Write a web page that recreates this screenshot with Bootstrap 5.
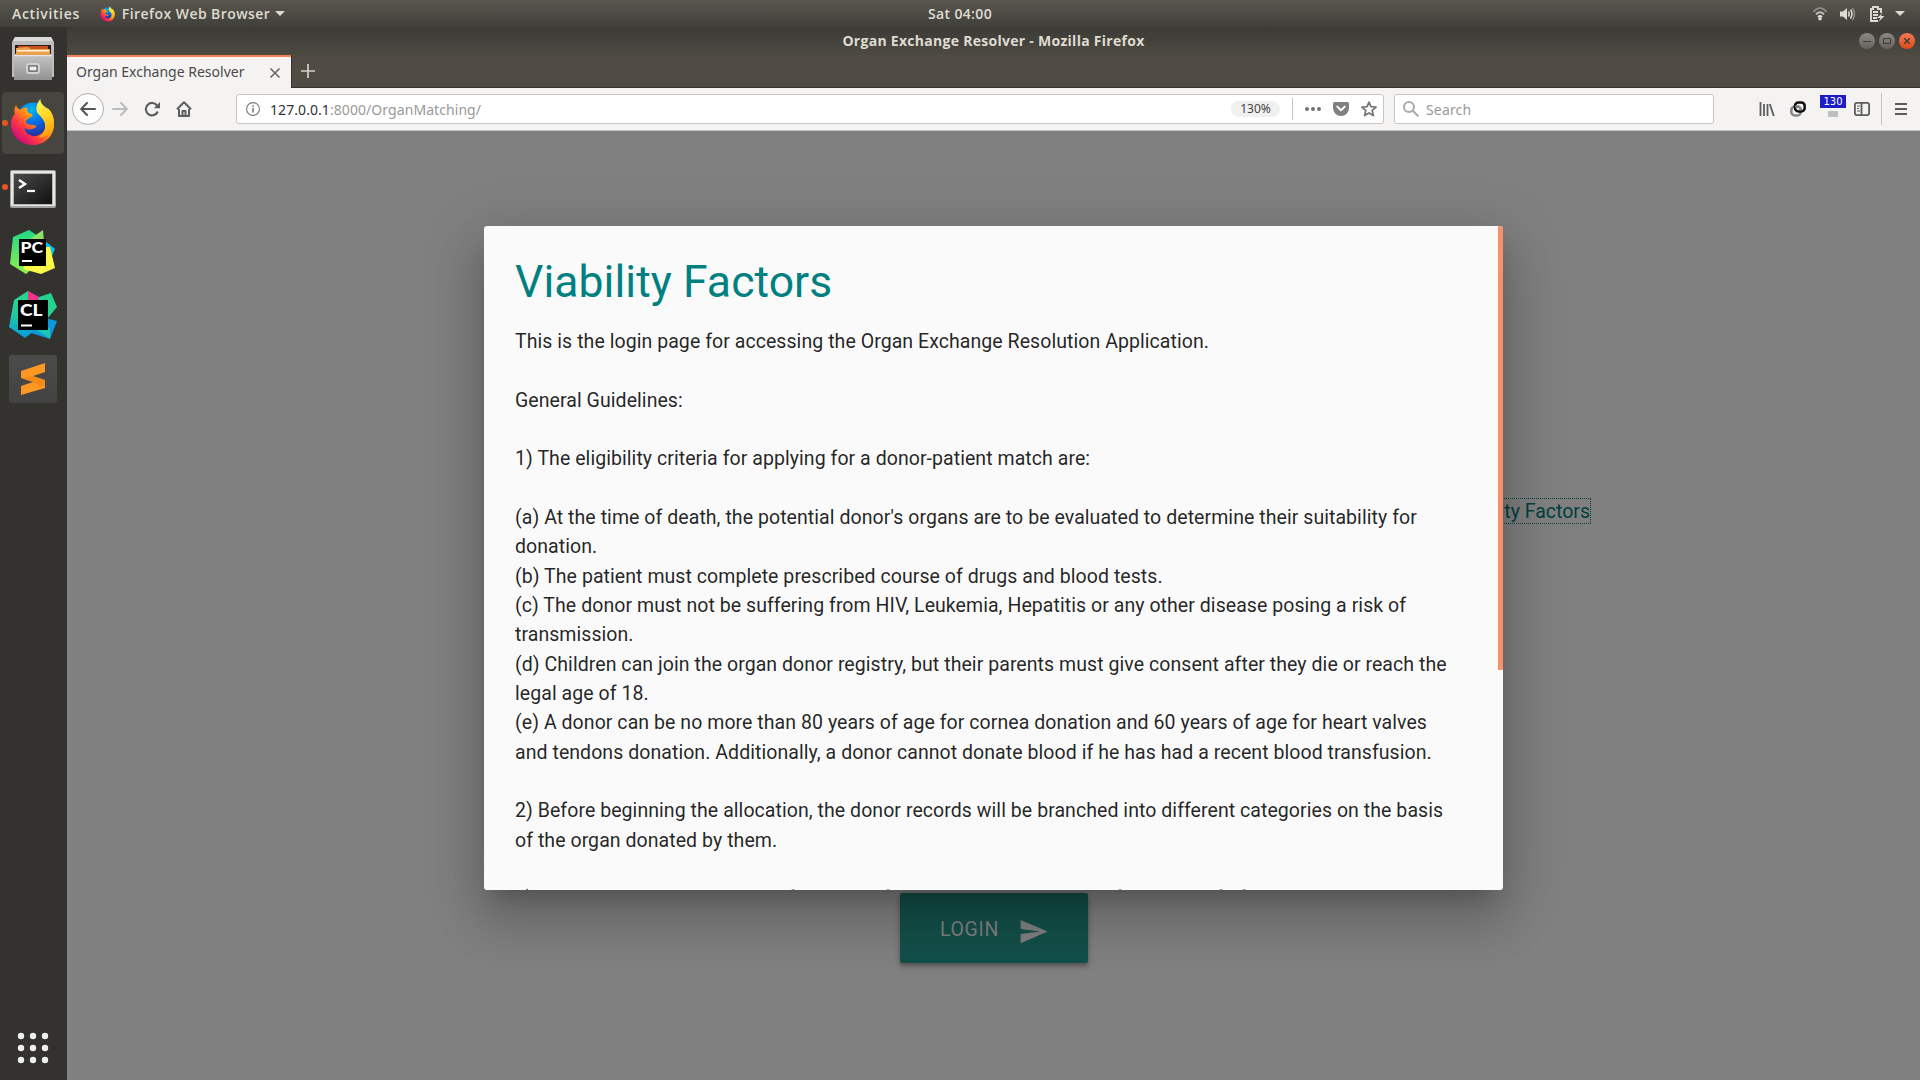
<!DOCTYPE html>
<html lang="en">
<head>
<meta charset="utf-8">
<title>Organ Exchange Resolver</title>
<link href="https://cdn.jsdelivr.net/npm/bootstrap@5.3.0/dist/css/bootstrap.min.css" rel="stylesheet">
<style>
html,body{height:100%;overflow:hidden}
body{font-family:"Noto Sans","Open Sans",sans-serif;font-size:14px;line-height:1;background:#808080}
svg{display:block;flex:none}
.txt{white-space:nowrap;display:inline-block}
.sysbar{height:27px;flex:none;background:linear-gradient(#5a574f,#403f3a);color:#dfdbd2;font-weight:600;font-family:"Open Sans",sans-serif}
.dock{width:67px;flex:none;background:#33322e}
.slot{height:64px;padding-right:2px}
.tile{width:62px;height:62px;border-radius:4px;background:#464540}
.tile-sm{width:48px;height:48px;border-radius:3px;background:linear-gradient(#4b4b4c,#434344)}
.run-dot{left:2px;top:50%;width:6px;height:6px;margin-top:-3px;border-radius:50%;background:#e95420}
.titlebar{height:28px;flex:none;background:linear-gradient(#3b3a36,#4d4a42);color:#dfdbd2;font-weight:700;font-family:"Open Sans",sans-serif;letter-spacing:.28px}
.tabstrip{height:33px;flex:none;background:#504c44}
.tab-on{width:224px;background:#f4f3f2;border-top:2px solid #f0815a;color:#4a4a4a;padding-left:9px;padding-right:8px}
.tab-rest{border-left:1px solid #33322e;border-bottom:1px solid #33322e}
.toolbar{height:43px;flex:none;background:#f4f3f2;border-bottom:1px solid #c3c2c0;padding-left:5px}
.tool{width:32px;height:32px;flex:none}
.back-btn{border:1px solid #b0afad;border-radius:50%;background:#fdfdfd}
.field{height:30px;background:#fff;border:1px solid #c6c5c3;border-radius:3px;color:#999;flex:none}
.url-field{width:1148px;margin-left:36px}
.search-field{width:320px;margin-left:10px;margin-right:36px}
.zoom-pill{width:49px;height:16px;border-radius:8px;background:#f0f0f0;color:#444;font-size:12px}
.vline{width:1px;background:#c6c5c3}
.count{width:26px;height:13px;background:#1d1dc4;color:#fff;font:10px "DejaVu Sans",sans-serif}
.stub{width:10px;height:6px;background:#bfbfbf}
.page{background:#808080;font-family:Roboto,sans-serif;font-size:19.5px}
.factor-link{color:#00403f;border:1px dotted #003f40;height:26px;line-height:26px;margin:367px 329px 0 0}
.login-btn{width:188px;height:70px;margin-top:369px;margin-left:1px;border-radius:2px;background:#135049;color:#808080;padding-left:40px;box-shadow:0 3px 3px rgba(0,0,0,.14),0 4px 6px rgba(0,0,0,.12),0 1px 6px rgba(0,0,0,.15)}
.dialog-box{left:417px;top:95px;width:1019px;height:664px;background:#fafafa;border-radius:3px;padding:32px 31px 0;color:rgba(0,0,0,.87);box-shadow:0 31px 49px 4px rgba(0,0,0,.14),0 12px 60px 10px rgba(0,0,0,.12),0 14px 20px -9px rgba(0,0,0,.2)}
.dialog-box h4{color:teal;font-size:44.5px;line-height:49px;margin:0 0 20px;font-weight:400;letter-spacing:.05px}
.dialog-box p{line-height:29.33px;white-space:nowrap;margin:0;letter-spacing:.06px}
.read-bar{right:0;top:0;width:5px;height:444px;background:#f4926b;border-radius:1px}
</style>
<script src="https://cdn.jsdelivr.net/npm/bootstrap@5.3.0/dist/js/bootstrap.bundle.min.js"></script>
</head>
<body class="d-flex flex-column">
<svg width="0" height="0" class="position-absolute">
 <defs>
  <linearGradient id="fxBody" x1=".9" y1=".1" x2=".1" y2=".9"><stop offset="0" stop-color="#ffe226"/><stop offset=".4" stop-color="#ff980e"/><stop offset=".68" stop-color="#ff3647"/><stop offset="1" stop-color="#c60084"/></linearGradient>
  <radialGradient id="fxGlobe" cx=".45" cy=".2" r=".85"><stop offset="0" stop-color="#00b5f0"/><stop offset=".5" stop-color="#0a63e0"/><stop offset="1" stop-color="#321b7c"/></radialGradient>
  <linearGradient id="fxTail" x1=".3" y1="0" x2=".6" y2="1"><stop offset="0" stop-color="#fff44f"/><stop offset=".5" stop-color="#ffd524"/><stop offset="1" stop-color="#ff9a0c"/></linearGradient>
  <linearGradient id="steel" x1="0" y1="0" x2="0" y2="1"><stop offset="0" stop-color="#c4c4c4"/><stop offset="1" stop-color="#929292"/></linearGradient>
  <linearGradient id="screen" x1="0" y1="0" x2="1" y2="1"><stop offset="0" stop-color="#4a4a4a"/><stop offset=".5" stop-color="#2e2e2e"/><stop offset="1" stop-color="#101010"/></linearGradient>
  <linearGradient id="orb" x1="0" y1="0" x2="0" y2="1"><stop offset="0" stop-color="#8b8983"/><stop offset="1" stop-color="#64625c"/></linearGradient>
  <linearGradient id="orbRed" x1="0" y1="0" x2="0" y2="1"><stop offset="0" stop-color="#f37a52"/><stop offset="1" stop-color="#df4a16"/></linearGradient>
  <linearGradient id="pcG" x1="0" y1="0" x2="0" y2="1"><stop offset="0" stop-color="#21d789"/><stop offset="1" stop-color="#8ff04a"/></linearGradient>
  <linearGradient id="clG" x1="0" y1="0" x2="0" y2="1"><stop offset="0" stop-color="#26d78d"/><stop offset=".5" stop-color="#21c9a0"/><stop offset="1" stop-color="#069adf"/></linearGradient>
  <symbol id="fox" viewBox="0 0 46 48">
   <circle cx="24" cy="22" r="18.500" fill="url(#fxGlobe)"/>
   <path d="M6 6C4 10 4 13 5 15C1 19 0 26 2 32C5 42 14 47 23 47C35 47 45 38 45 26C45 18 42 12 38 9C41 17 39 23 36 26C37 34 30 38 24 38C18 37 15 33 15 30C20 32 24 31 27 28C26 26 21 27 17 25C15 22 18 20 22 18C24 16 23 15 21 15C18 14 17 12 18 9C14 8 12 10 11 11C8 10 7 8 6 6Z" fill="url(#fxBody)"/>
   <path d="M31 0C27 5 26 10 28 14C31 18 36 21 36 28C36 33 33 36 29 39C38 39 45 33 45 25C45 17 42 12 37 9C33 6 31 4 31 0Z" fill="url(#fxTail)"/>
  </symbol>
 </defs>
</svg>

<header class="sysbar d-flex align-items-center position-relative">
 <span class="txt" style="margin-left:12px;letter-spacing:.65px">Activities</span>
 <svg width="15" height="16" style="margin-left:20px"><use href="#fox"/></svg>
 <span class="txt" style="margin-left:7px;letter-spacing:.43px">Firefox Web Browser</span>
 <svg width="10" height="6" style="margin-left:5px"><path d="M0 0h10L5 5z" fill="#dfdbd2"/></svg>
 <span class="txt position-absolute top-50 start-50 translate-middle" style="letter-spacing:.35px">Sat 04:00</span>
 <div class="d-flex align-items-center ms-auto" style="margin-right:15px">
  <svg width="14" height="14" viewBox="0 0 14 14" fill="none" stroke="#8d8b85" stroke-width="1.8"><path d="M.5 5C4-.2 10-.2 13.500 5" /><path d="M3 7.500c2-3 6-3 8 0" stroke="#c5c2bb"/><path d="M5 10q2-2 4 0" stroke="#dfdbd2"/><circle cx="7" cy="11.700" r="1.800" fill="#dfdbd2" stroke="none"/></svg>
  <svg width="16" height="14" viewBox="0 0 16 14" fill="none" stroke="#dfdbd2" stroke-width="1.500" style="margin-left:13px"><path d="M0 4.500h3L7 1v12L3 9.500H0z" fill="#dfdbd2" stroke="none"/><path d="M8.500 4.500q1.500 2.500 0 5M10.500 2.500q3 4.500 0 9"/><path d="M12.500 .8q4 6 0 12.400" stroke="#8d8b85"/></svg>
  <svg width="15" height="16" viewBox="0 0 15 16" fill="none" stroke="#dfdbd2" stroke-width="1.900" style="margin-left:14px"><path d="M8 15H1V3h2V1h5v2h3v4M3 6h5M3 9h5M3 12h4"/><path d="M12.500 7L7 12h3.500L8.500 16l6-6H11z" fill="#dfdbd2" stroke="none"/></svg>
  <svg width="10" height="6" style="margin-left:10px"><path d="M0 0h10L5 5z" fill="#dfdbd2"/></svg>
 </div>
</header>

<div class="d-flex flex-grow-1">
 <nav class="dock d-flex flex-column">
  <div class="slot d-flex align-items-center justify-content-center">
   <svg width="42" height="44" viewBox="0 0 42 44"><path d="M3 0h36l3 5v35H0V5z" fill="#bdbdbd"/><path d="M3 0h36l2 4H1z" fill="#dadada"/><path d="M3 8h36v9H3z" fill="#2b1c15"/><path d="M6 9h30v3H6z" fill="#c8501c"/><path d="M4 11l12-1 3 2h19v6H4z" fill="#eda04c"/><path d="M5 13h32v1.500H5z" fill="#fff1dc"/><path d="M2 18h38v25H2z" fill="url(#steel)"/><path d="M2 18h38v1.200H2z" fill="#e4e4e4"/><rect x="15" y="27" width="12" height="9" rx="2" fill="none" stroke="#d2d2d2" stroke-width="2"/><rect x="17" y="29" width="8" height="5" fill="#eee" stroke="#555"/></svg>
  </div>
  <div class="slot d-flex align-items-center justify-content-center position-relative">
   <div class="tile d-flex align-items-center justify-content-center"><svg width="45" height="47" style="margin-top:-2px"><use href="#fox"/></svg></div><i class="run-dot position-absolute"></i>
  </div>
  <div class="slot d-flex align-items-center justify-content-center position-relative">
   <svg width="46" height="38" viewBox="0 0 46 38" style="margin-top:3px"><rect width="46" height="38" rx="2" fill="#a0a09e"/><rect x="1" y="1" width="44" height="35" rx="1" fill="#e6e6e4"/><rect x="3" y="3" width="40" height="32" fill="#b5b5b3"/><rect x="4" y="4" width="38" height="30" fill="url(#screen)"/><path d="M9 10l6 4-6 4" fill="none" stroke="#fff" stroke-width="2.400"/><path d="M17 21h8" stroke="#fff" stroke-width="2.200"/></svg><i class="run-dot position-absolute"></i>
  </div>
  <div class="slot d-flex align-items-center justify-content-center">
   <svg width="48" height="48" viewBox="0 0 48 48" style="margin-top:-1px"><path d="M4 10L20 3l12 8-8 30-7 6L1 37z" fill="url(#pcG)"/><path d="M34 3l1 12-14-3z" fill="#8ee26c"/><path d="M36 14l10 8-6 14-8-6z" fill="#07c3f2"/><path d="M36 20h5l5 21-14 6-18-5 4-8z" fill="#fcf84a"/><rect x="10" y="12" width="27" height="27"/><text x="11.500" y="26" font-family="Lato,sans-serif" font-weight="900" font-size="15.500" textLength="22.500" lengthAdjust="spacingAndGlyphs" fill="#fff">PC</text><path d="M13 33h10v2H13z" fill="#fff"/></svg>
  </div>
  <div class="slot d-flex align-items-center justify-content-center">
   <svg width="48" height="48" viewBox="0 0 48 48"><path d="M5 9L19 0l10 7-5 34-8 6L0 36z" fill="url(#clG)"/><path d="M19 0l11 6v6H19z" fill="#ed358c"/><path d="M30 6l12-4 6 14-10 12-10-14z" fill="#22d490"/><path d="M36 27l12 3-7 18-19-6z" fill="#0b98dc"/><path d="M28 39l13-2v11z" fill="#1cc5b0"/><rect x="9" y="9" width="30" height="30"/><text x="11" y="25" font-family="Lato,sans-serif" font-weight="900" font-size="17" textLength="22.500" lengthAdjust="spacingAndGlyphs" fill="#fff">CL</text><path d="M12 33.500h11v2H12z" fill="#fff"/></svg>
  </div>
  <div class="slot d-flex align-items-center justify-content-center">
   <div class="tile-sm d-flex align-items-center justify-content-center"><svg width="24" height="32" viewBox="0 0 24 32"><path d="M0 8L24 0v9L12 13l12 4v8L0 32v-9l12-4-12-4z" fill="#ff9822"/><path d="M0 15l12 4 8 4.500 4-1.500v-5L12 13z" fill="#e67c10" opacity=".45"/></svg></div>
  </div>
  <svg class="mt-auto" width="30" height="31" style="margin:0 0 16px 18px;overflow:visible" fill="#eeeeec"><g id="r"><circle cx="3" cy="3" r="3.200"/><circle cx="15" cy="3" r="3.200"/><circle cx="27" cy="3" r="3.200"/></g><use href="#r" y="12"/><use href="#r" y="24"/></svg>
 </nav>

 <main class="d-flex flex-column flex-grow-1">
  <div class="titlebar d-flex align-items-center justify-content-center position-relative">
   <span class="txt">Organ Exchange Resolver - Mozilla Firefox</span>
   <div class="position-absolute end-0 d-flex" style="gap:4px;margin-right:5px">
    <svg width="16" height="16" viewBox="0 0 16 16"><circle cx="8" cy="8" r="8" fill="url(#orb)"/><path d="M4 8.500h8" stroke="#3c3b37"/></svg>
    <svg width="16" height="16" viewBox="0 0 16 16"><circle cx="8" cy="8" r="8" fill="url(#orb)"/><path d="M4.500 5.500h7v5h-7z" fill="none" stroke="#3c3b37"/></svg>
    <svg width="16" height="16" viewBox="0 0 16 16"><circle cx="8" cy="8" r="8" fill="url(#orbRed)"/><path d="M5.200 5.200l5.600 5.600M10.800 5.200l-5.600 5.600" stroke="#3c3b37" stroke-width="1.300"/></svg>
   </div>
  </div>
  <div class="tabstrip d-flex">
   <div class="tab-on d-flex align-items-center justify-content-between"><span class="txt" style="margin-top:-2px">Organ Exchange Resolver</span>
    <svg width="16" height="16" viewBox="0 0 16 16" stroke="#666" stroke-width="1.600"><path d="M3.500 3.500l9 9M12.500 3.500l-9 9"/></svg></div>
   <div class="tab-rest flex-grow-1 d-flex align-items-center"><svg width="14" height="14" viewBox="0 0 14 14" stroke="#d4d1c9" stroke-width="1.700" style="margin-left:9px"><path d="M7 0v14M0 7h14"/></svg></div>
  </div>
  <div class="toolbar d-flex align-items-center">
   <div class="tool back-btn d-flex align-items-center justify-content-center"><svg width="16" height="14" viewBox="0 0 16 14" fill="none" stroke="#555" stroke-width="2" stroke-linecap="round" stroke-linejoin="round"><path d="M15 7H1.500M7 1L1.200 7 7 13"/></svg></div>
   <div class="tool d-flex align-items-center justify-content-center"><svg width="16" height="14" viewBox="0 0 16 14" fill="none" stroke="#bbb" stroke-width="2" stroke-linecap="round" stroke-linejoin="round"><path d="M1 7h13.500M9 1l5.800 6L9 13"/></svg></div>
   <div class="tool d-flex align-items-center justify-content-center"><svg width="16" height="16" viewBox="0 0 16 16" fill="none" stroke="#5c5c5c" stroke-width="2.100"><path d="M13.800 10.500A6.200 6.200 0 1 1 13.300 4.800"/><path d="M16 1v6.200H9.800z" fill="#5c5c5c" stroke="none"/></svg></div>
   <div class="tool d-flex align-items-center justify-content-center"><svg width="16" height="16" viewBox="0 0 16 16" fill="none" stroke="#5c5c5c" stroke-width="2" stroke-linejoin="round"><path d="M1 8.300L8 1.200l7 7.100M3 8v7h10V8"/><path d="M6.500 15v-5h3v5"/></svg></div>
   <div class="field url-field d-flex align-items-center">
    <svg width="14" height="14" viewBox="0 0 14 14" fill="none" stroke="#777" style="margin-left:9px"><circle cx="7" cy="7" r="6.400" stroke-width="1.100"/><path d="M7 6v4.500M7 3.200v1.600" stroke-width="1.600"/></svg>
    <span class="txt" style="margin:1px 0 0 10px;letter-spacing:.07px"><span style="color:#333">127.0.0.1</span>:8000/OrganMatching/</span>
    <span class="zoom-pill d-flex align-items-center justify-content-center ms-auto">130%</span>
    <span class="vline" style="height:22px;margin-left:12px"></span>
    <svg width="16" height="4" style="margin-left:12px" fill="#737373"><circle cx="2" cy="2" r="2"/><circle cx="8" cy="2" r="2"/><circle cx="14" cy="2" r="2"/></svg>
    <svg width="16" height="14" viewBox="0 0 16 14" style="margin-left:12px"><path d="M1.500 0h13Q16 0 16 1.500V6a8 8 0 0 1-16 0V1.500Q0 0 1.500 0z" fill="#808080"/><path d="M4.300 4.600L8 8.200l3.700-3.600" fill="none" stroke="#fff" stroke-width="2" stroke-linecap="round" stroke-linejoin="round"/></svg>
    <svg width="16" height="16" viewBox="0 0 16 16" style="margin:0 6px 0 12px" fill="none" stroke="#777" stroke-width="1.800" stroke-linejoin="round"><path d="M8 1.200l2 4.500 5 .5-3.800 3.200 1.200 5.200L8 12l-4.400 2.600 1.200-5.200L1 6.200l5-.5z"/></svg>
   </div>
   <div class="field search-field d-flex align-items-center">
    <svg width="16" height="16" viewBox="0 0 16 16" fill="none" stroke="#aaa" stroke-width="2" style="margin-left:8px"><circle cx="6" cy="6" r="5"/><path d="M9.700 9.700L15.300 15.300"/></svg>
    <span class="txt" style="margin:1px 0 0 7px;letter-spacing:.15px">Search</span>
   </div>
   <div class="tool d-flex align-items-center justify-content-center"><svg width="16" height="14" viewBox="0 0 16 14" stroke="#5c5c5c" stroke-width="1.800" style="margin-left:1px"><path d="M1.500 0v14M5 2v12M8.500 2v12M10.800 2l4 12"/></svg></div>
   <div class="tool d-flex align-items-center justify-content-center"><svg width="16" height="16" viewBox="0 0 16 16" fill="none" stroke-width="2.500"><rect x="1.300" y="5.500" width="9.500" height="9" rx="3.500" stroke="#85858c"/><rect x="5" y="1.400" width="9.700" height="9" rx="3.500" stroke="#0c0c0d"/><path d="M5 5.500h2q3.800 0 3.800 4" stroke="#85858c" stroke-width="2"/></svg></div>
   <div class="d-flex flex-column align-items-center" style="width:38px;gap:3px;margin-top:-6px"><span class="count d-flex align-items-center justify-content-center">130</span><span class="stub"></span></div>
   <div class="d-flex justify-content-center" style="width:20px"><svg width="16" height="14" viewBox="0 0 16 14" fill="none" stroke="#5c5c5c" stroke-width="1.800"><rect x=".9" y=".9" width="14.200" height="12.200" rx="2"/><path d="M7.500 1v12"/><path d="M3 4h3M3 6.500h2M3 9h3" stroke-width="1"/></svg></div>
   <span class="vline" style="height:32px;margin-left:9px"></span>
   <div class="flex-grow-1 d-flex justify-content-center"><svg width="12" height="12" viewBox="0 0 12 12" stroke="#5c5c5c" stroke-width="1.800"><path d="M0 1h12M0 6h12M0 11h12"/></svg></div>
  </div>

  <div class="page flex-grow-1 position-relative d-flex flex-column align-items-center">
   <a class="factor-link align-self-end text-decoration-none txt">Viability Factors</a>
   <div class="login-btn d-flex align-items-center"><span class="txt" style="letter-spacing:.65px;padding-top:4px">LOGIN</span>
    <svg width="31" height="31" viewBox="0 0 24 24" style="margin:6px 0 0 19px"><path d="M2 21L23 12 2 3v7l15 2-15 2z" fill="#808080"/></svg></div>
   <section class="dialog-box position-absolute overflow-hidden">
    <h4>Viability Factors</h4>
    <p>This is the login page for accessing the Organ Exchange Resolution Application.<br><br>
General Guidelines:<br><br>
1) The eligibility criteria for applying for a donor-patient match are:<br><br>
(a) At the time of death, the potential donor's organs are to be evaluated to determine their suitability for<br>donation.<br>
(b) The patient must complete prescribed course of drugs and blood tests.<br>
(c) The donor must not be suffering from HIV, Leukemia, Hepatitis or any other disease posing a risk of<br>transmission.<br>
(d) Children can join the organ donor registry, but their parents must give consent after they die or reach the<br>legal age of 18.<br>
(e) A donor can be no more than 80 years of age for cornea donation and 60 years of age for heart valves<br>and tendons donation. Additionally, a donor cannot donate blood if he has had a recent blood transfusion.<br><br>
2) Before beginning the allocation, the donor records will be branched into different categories on the basis<br>of the organ donated by them.<br><br>
3) The patients are then sorted for organs from the available donors if they are a fit for transplant.</p>
    <div class="read-bar position-absolute"></div>
   </section>
  </div>
 </main>
</div>
</body>
</html>
